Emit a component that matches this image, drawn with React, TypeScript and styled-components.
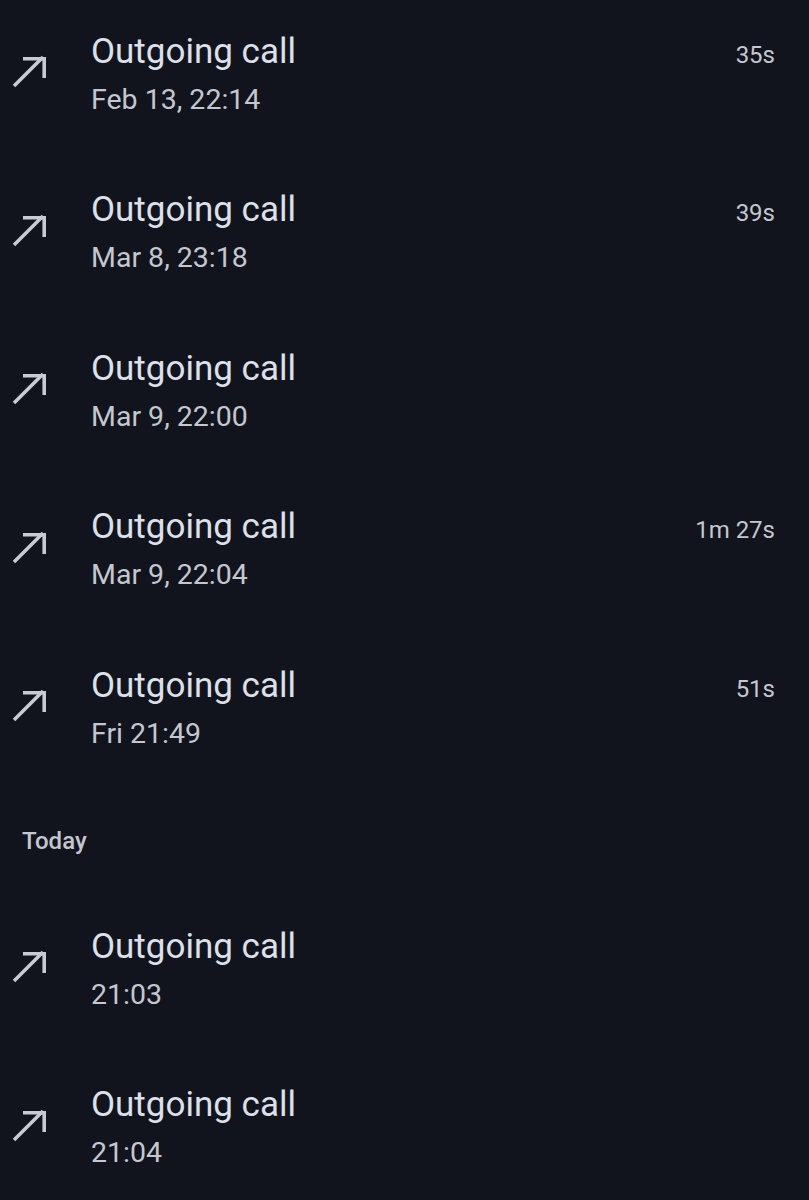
import React from "react";
import styled, { createGlobalStyle } from "styled-components";

const Global = createGlobalStyle`
  html, body { margin: 0; padding: 0; background: #11141c; }
  body { font-family: Roboto, "Noto Sans", sans-serif; -webkit-font-smoothing: antialiased; }
`;

const Page = styled.div`
  width: 809px;
  height: 1200px;
  overflow: hidden;
  background: #11141c;
  display: flex;
  flex-direction: column;
  margin-top: -3px;
`;

const Row = styled.div`
  height: 158.5px;
  flex: 0 0 158.5px;
  display: flex;
  align-items: center;
  box-sizing: border-box;
  padding-right: 34px;
`;

const IconBox = styled.div`
  width: 91px;
  flex: 0 0 91px;
  display: flex;
  align-items: center;
  padding-left: 10px;
  box-sizing: border-box;
  margin-top: -6px;
`;

const Texts = styled.div`
  flex: 1;
  display: flex;
  flex-direction: column;
  margin-top: -3px;
`;

const TitleLine = styled.div`
  display: flex;
  align-items: baseline;
  justify-content: space-between;
`;

const Title = styled.span`
  font-size: 35px;
  line-height: 50px;
  color: #dde0e8;
  font-weight: 400;
`;

const Duration = styled.span`
  font-size: 24px;
  color: #c4c7cf;
`;

const Sub = styled.span`
  font-size: 28.5px;
  line-height: 46px;
  color: #c4c7cf;
`;

const Header = styled.div`
  flex: 0 0 102.5px;
  height: 102.5px;
  display: flex;
  align-items: center;
  padding-left: 22px;
  font-size: 24px;
  font-weight: 500;
  color: #c4c7cf;
`;

const Arrow = () => (
  <svg width="40" height="40" viewBox="0 0 40 40" fill="none" stroke="#c8cbd3" strokeWidth="3.6" strokeLinecap="butt">
    <path d="M4 33 L33 4" />
    <path d="M13 5.8 H34.2 V25" />
  </svg>
);

type Call = { sub: string; dur?: string };

const CallRow = ({ sub, dur }: Call) => (
  <Row>
    <IconBox>
      <Arrow />
    </IconBox>
    <Texts>
      <TitleLine>
        <Title>Outgoing call</Title>
        {dur && <Duration>{dur}</Duration>}
      </TitleLine>
      <Sub>{sub}</Sub>
    </Texts>
  </Row>
);

const earlier: Call[] = [
  { sub: "Feb 13, 22:14", dur: "35s" },
  { sub: "Mar 8, 23:18", dur: "39s" },
  { sub: "Mar 9, 22:00" },
  { sub: "Mar 9, 22:04", dur: "1m 27s" },
  { sub: "Fri 21:49", dur: "51s" },
];

const today: Call[] = [{ sub: "21:03" }, { sub: "21:04" }];

export default function App() {
  return (
    <>
      <Global />
      <Page>
        {earlier.map((c, i) => (
          <CallRow key={i} {...c} />
        ))}
        <Header>Today</Header>
        {today.map((c, i) => (
          <CallRow key={"t" + i} {...c} />
        ))}
      </Page>
    </>
  );
}
